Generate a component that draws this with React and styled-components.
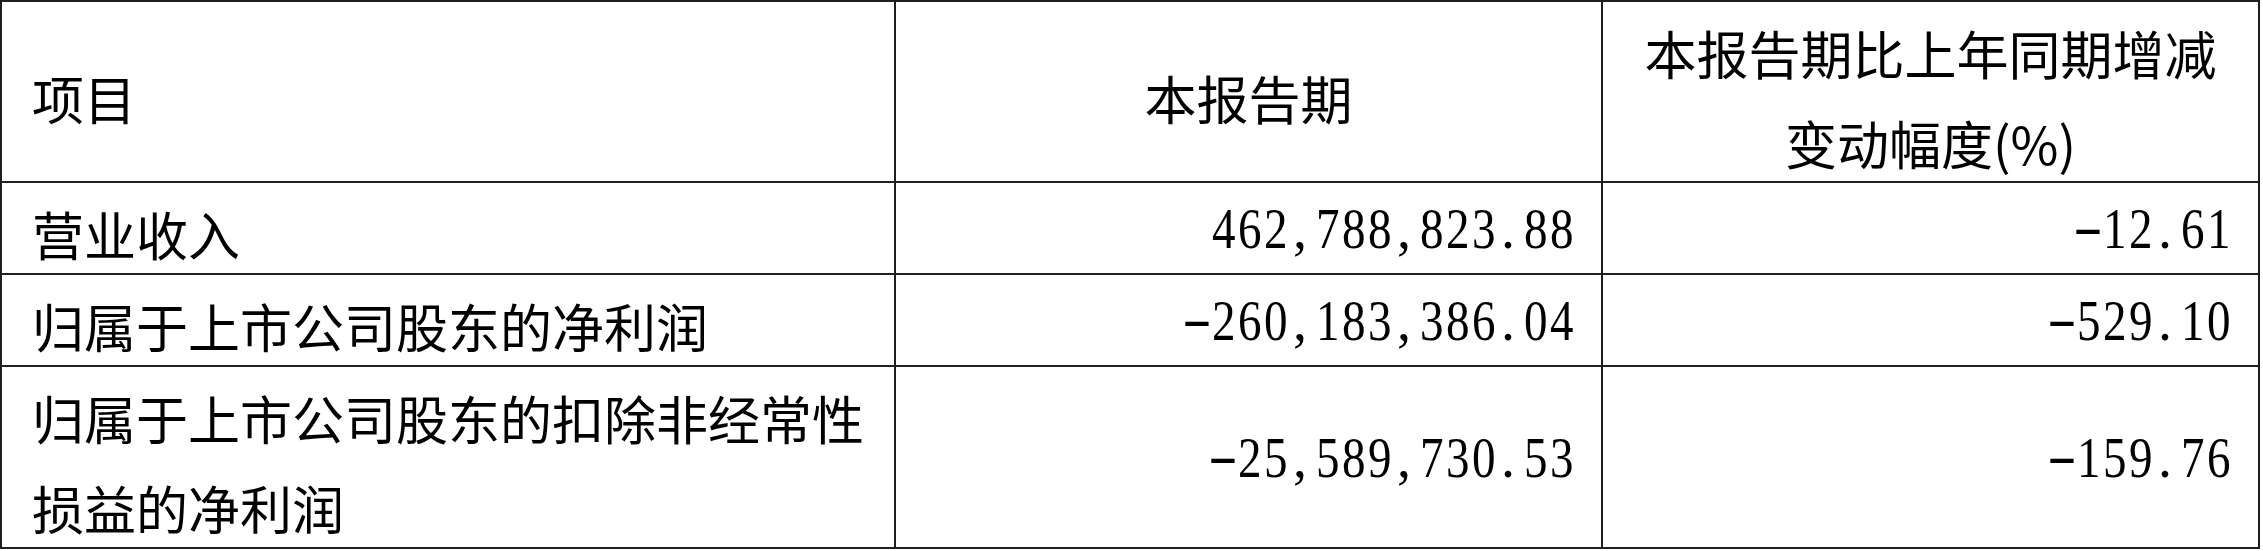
import React from 'react';
import styled, { createGlobalStyle } from 'styled-components';

const GlobalStyle = createGlobalStyle`
  body {
    margin: 0;
    background: #fff;
    font-family: 'Noto Sans CJK SC', sans-serif;
    color: #000;
  }
`;

const Table = styled.div`
  display: grid;
  grid-template-columns: 892px 705px 655px;
  grid-template-rows: 179px 90px 90px 180px;
  gap: 2px;
  padding: 2px;
  width: max-content;
  background-color: #1e1e1e;
`;

const Cell = styled.div`
  display: flex;
  align-items: center;
  justify-content: ${(p) => (p.$align === 'center' ? 'center' : p.$align === 'right' ? 'flex-end' : 'flex-start')};
  box-sizing: border-box;
  padding: ${(p) => (p.$numeric ? '2px 27px 0 0' : '12px 0 0 30px')};
  padding-left: ${(p) => (p.$align === 'center' ? '0' : undefined)};
  background-color: #fff;
  overflow: visible;
`;

const Label = styled.div`
  font-family: 'Noto Sans CJK SC', sans-serif;
  font-size: 52px;
  line-height: 90px;
  text-align: ${(p) => (p.$center ? 'center' : 'left')};
  white-space: nowrap;
`;

const FigureText = styled.div`
  font-family: 'Liberation Serif', 'Times New Roman', serif;
  font-size: 56px;
  line-height: 90px;
  white-space: nowrap;
`;

const Glyph = styled.span`
  display: inline-block;
  width: 26px;
  text-align: ${(p) => (p.$punct ? 'left' : 'center')};
  padding-left: ${(p) => (p.$punct ? '5px' : '0')};
  box-sizing: border-box;
  transform: ${(p) => (p.$dash ? 'scaleX(1.6) translateY(-3px)' : p.$punct ? 'none' : 'scaleX(0.84)')};
`;

const rows = [
  { label: ['营业收入'], amount: '462,788,823.88', change: '-12.61' },
  { label: ['归属于上市公司股东的净利润'], amount: '-260,183,386.04', change: '-529.10' },
  {
    label: ['归属于上市公司股东的扣除非经常性', '损益的净利润'],
    amount: '-25,589,730.53',
    change: '-159.76',
  },
];

const Lines = ({ lines, center }) => (
  <Label $center={center}>
    {lines.map((line, i) => (
      <React.Fragment key={i}>
        {i > 0 && <br />}
        {line}
      </React.Fragment>
    ))}
  </Label>
);

const Figure = ({ value }) => (
  <FigureText>
    {[...value].map((ch, i) => (
      <Glyph key={i} $punct={ch === ',' || ch === '.'} $dash={ch === '-'}>
        {ch}
      </Glyph>
    ))}
  </FigureText>
);

const App = () => (
  <>
    <GlobalStyle />
    <Table>
      <Cell>
        <Lines lines={['项目']} />
      </Cell>
      <Cell $align="center">
        <Lines lines={['本报告期']} center />
      </Cell>
      <Cell $align="center">
        <Lines lines={['本报告期比上年同期增减', '变动幅度(%)']} center />
      </Cell>
      {rows.map((row) => (
        <React.Fragment key={row.amount}>
          <Cell>
            <Lines lines={row.label} />
          </Cell>
          <Cell $numeric $align="right">
            <Figure value={row.amount} />
          </Cell>
          <Cell $numeric $align="right">
            <Figure value={row.change} />
          </Cell>
        </React.Fragment>
      ))}
    </Table>
  </>
);

export default App;
